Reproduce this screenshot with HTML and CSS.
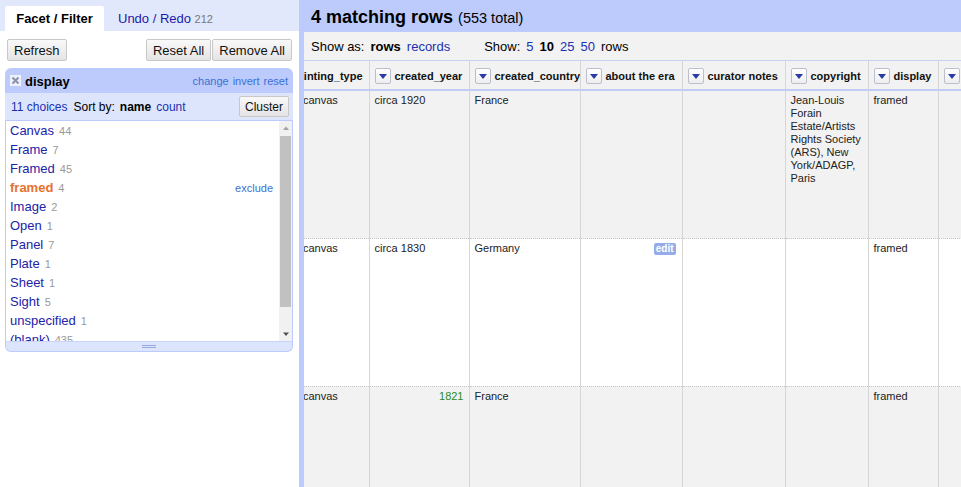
FILE: index.html
```html
<!DOCTYPE html>
<html>
<head>
<meta charset="utf-8">
<link rel="stylesheet" href="styles.css">
</head>
<body>
<div class="left">
  <div class="tabs">
    <div class="tab active">Facet / Filter</div>
    <div class="tab">Undo / Redo <span class="tabcount">212</span></div>
  </div>
  <div class="toolbar">
    <button class="btn">Refresh</button>
    <div class="spacer"></div>
    <button class="btn">Reset All</button>
    <button class="btn">Remove All</button>
  </div>
  <div class="facet">
    <div class="facet-header">
      <svg class="close" width="11" height="11" viewBox="0 0 11 11"><rect x="0" y="0" width="11" height="11" fill="#eef2fc"/><path d="M2.5 2.5 L8.5 8.5 M8.5 2.5 L2.5 8.5" stroke="#8892ad" stroke-width="2"/></svg>
      <span class="facet-title">display</span>
      <span class="spacer"></span>
      <a class="hlink">change</a><a class="hlink">invert</a><a class="hlink">reset</a>
    </div>
    <div class="facet-controls">
      <a class="choices">11 choices</a>
      <span class="sortby">Sort by:</span>
      <b class="sortname">name</b>
      <a class="choices">count</a>
      <span class="spacer"></span>
      <button class="btn small">Cluster</button>
    </div>
    <div class="facet-body">
      <div class="choice-list">
        <div class="choice"><a class="cname">Canvas</a><span class="ccount">44</span></div>
        <div class="choice"><a class="cname">Frame</a><span class="ccount">7</span></div>
        <div class="choice"><a class="cname">Framed</a><span class="ccount">45</span></div>
        <div class="choice selected"><a class="cname">framed</a><span class="ccount">4</span><span class="spacer"></span><a class="exclude">exclude</a></div>
        <div class="choice"><a class="cname">Image</a><span class="ccount">2</span></div>
        <div class="choice"><a class="cname">Open</a><span class="ccount">1</span></div>
        <div class="choice"><a class="cname">Panel</a><span class="ccount">7</span></div>
        <div class="choice"><a class="cname">Plate</a><span class="ccount">1</span></div>
        <div class="choice"><a class="cname">Sheet</a><span class="ccount">1</span></div>
        <div class="choice"><a class="cname">Sight</a><span class="ccount">5</span></div>
        <div class="choice"><a class="cname">unspecified</a><span class="ccount">1</span></div>
        <div class="choice"><a class="cname">(blank)</a><span class="ccount">435</span></div>
      </div>
      <div class="scrollbar">
        <svg class="arrow" width="12" height="12" viewBox="0 0 12 12"><path d="M3 8 L6 4.5 L9 8 Z" fill="#a3a3a3"/></svg>
        <div class="thumb"></div>
        <div class="track-rest"></div>
        <svg class="arrow" width="12" height="12" viewBox="0 0 12 12"><path d="M3 4.5 L6 8 L9 4.5 Z" fill="#505050"/></svg>
      </div>
    </div>
    <div class="facet-footer"><div class="grip"></div></div>
  </div>
</div>
<div class="right">
  <div class="summary"><b>4 matching rows</b> <span class="total">(553 total)</span></div>
  <div class="main">
    <div class="viewbar">
      <span>Show as:</span><b>rows</b><a class="link">records</a>
      <span class="showgrp">Show:</span><a class="link">5</a><b>10</b><a class="link">25</a><a class="link">50</a><span>rows</span>
    </div>
    <div class="table-wrap">
      <table class="data">
        <colgroup>
          <col class="w1"><col class="w2"><col class="w3"><col class="w4"><col class="w5"><col class="w6"><col class="w7"><col class="w8">
        </colgroup>
        <thead>
          <tr>
            <th class="cut"><div class="hd shift"><span class="dd"></span>painting_type</div></th>
            <th><div class="hd"><span class="dd"></span>created_year</div></th>
            <th><div class="hd"><span class="dd"></span>created_country</div></th>
            <th><div class="hd"><span class="dd"></span>about the era</div></th>
            <th><div class="hd"><span class="dd"></span>curator notes</div></th>
            <th><div class="hd"><span class="dd"></span>copyright</div></th>
            <th><div class="hd"><span class="dd"></span>display</div></th>
            <th><div class="hd"><span class="dd"></span></div></th>
          </tr>
        </thead>
        <tbody>
          <tr class="odd">
            <td class="cut"><span class="dshift">canvas</span></td>
            <td>circa 1920</td>
            <td>France</td>
            <td></td>
            <td></td>
            <td>Jean-Louis Forain Estate/Artists Rights Society (ARS), New York/ADAGP, Paris</td>
            <td>framed</td>
            <td></td>
          </tr>
          <tr class="even">
            <td class="cut"><span class="dshift">canvas</span></td>
            <td>circa 1830</td>
            <td>Germany</td>
            <td class="editcell"><span class="edit">edit</span></td>
            <td></td>
            <td></td>
            <td>framed</td>
            <td></td>
          </tr>
          <tr class="odd">
            <td class="cut"><span class="dshift">canvas</span></td>
            <td class="num">1821</td>
            <td>France</td>
            <td></td>
            <td></td>
            <td></td>
            <td>framed</td>
            <td></td>
          </tr>
        </tbody>
      </table>
    </div>
  </div>
</div>
</body>
</html>
```
FILE: styles.css
```css
html, body {
  margin: 0;
  padding: 0;
  height: 487px;
  overflow: hidden;
}
body {
  display: flex;
  font-family: "Liberation Sans", Arial, sans-serif;
  font-size: 13px;
  color: #000;
  background: #fff;
}
a { cursor: pointer; }
.spacer { flex: 1; }

/* left panel */
.left {
  width: 299px;
  flex: none;
  display: flex;
  flex-direction: column;
  background: #fff;
}
.tabs {
  height: 31px;
  background: #e2e8fb;
  display: flex;
  align-items: flex-end;
  padding-left: 5px;
  box-sizing: border-box;
}
.tab {
  height: 25px;
  line-height: 25px;
  padding: 0 14px;
  color: #1a1aaa;
  font-size: 13px;
}
.tab.active {
  width: 99px;
  box-sizing: border-box;
  padding: 0;
  text-align: center;
  background: #fff;
  color: #000;
  font-weight: bold;
  border-radius: 2px 2px 0 0;
}
.tabcount { color: #777; font-size: 11px; }

.toolbar {
  display: flex;
  gap: 1px;
  padding: 8px 7px 0 7px;
  height: 22px;
}
.btn {
  font-family: "Liberation Sans", Arial, sans-serif;
  font-size: 13px;
  height: 22px;
  padding: 0 6px;
  border: 1px solid #c8c8c8;
  border-radius: 2px;
  background: linear-gradient(#f9f9f9, #e4e4e4);
  color: #111;
  margin: 0;
}
.btn.small { height: 21px; font-size: 12px; padding: 0 5px; }

.facet {
  margin: 7px 6px 0 5px;
}
.facet-header {
  height: 25px;
  background: #bccbfb;
  border-radius: 6px 6px 0 0;
  display: flex;
  align-items: center;
  padding: 1px 5px 0 5px;
  box-sizing: border-box;
}
.close { margin-right: 4px; margin-top: -1px; }
.facet-title { font-weight: bold; font-size: 13px; }
.hlink {
  font-size: 11px;
  color: #3b6fd6;
  margin-left: 4px;
}
.facet-controls {
  height: 27px;
  background: #dde5fd;
  display: flex;
  align-items: center;
  padding: 0 4px 0 6px;
  font-size: 12px;
}
.choices { color: #2030b0; }
.sortby { margin: 0 5px 0 6px; }
.sortname { margin-right: 5px; }

.facet-body {
  height: 220px;
  border: 1px solid #bccbfb;
  border-bottom: none;
  display: flex;
  background: #fff;
  overflow: hidden;
}
.choice-list {
  flex: 1;
  padding: 0 6px 0 4px;
  overflow: hidden;
}
.choice {
  height: 19px;
  line-height: 19px;
  display: flex;
  align-items: baseline;
  white-space: nowrap;
}
.cname { color: #2222aa; font-size: 13px; }
.ccount { color: #999; font-size: 11px; margin-left: 5px; }
.selected .cname { color: #e8712a; font-weight: bold; }
.exclude { color: #3b6fd6; font-size: 11px; }

.scrollbar {
  width: 13px;
  display: flex;
  flex-direction: column;
  align-items: center;
  background: #f1f1f1;
}
.arrow { flex: none; margin: 1px 0; }
.thumb {
  width: 11px;
  height: 171px;
  background: #c1c1c1;
  margin-top: 1px;
}
.track-rest { flex: 1; }

.facet-footer {
  height: 9px;
  background: #dde5fd;
  border: 1px solid #bccbfb;
  border-top: 1px solid #c8d4fb;
  border-radius: 0 0 6px 6px;
  display: flex;
  justify-content: center;
  align-items: center;
}
.grip {
  width: 14px;
  height: 1px;
  border-top: 1px solid #95a8e2;
  border-bottom: 1px solid #95a8e2;
}

/* right panel */
.right {
  flex: 1;
  background: #bccbfb;
  display: flex;
  flex-direction: column;
  padding-left: 5px;
  min-width: 0;
}
.summary {
  height: 32px;
  line-height: 35px;
  padding-left: 7px;
  font-size: 18px;
  white-space: nowrap;
}
.summary .total { font-size: 14.5px; }
.main {
  flex: 1;
  background: #f2f2f2;
  display: flex;
  flex-direction: column;
  min-width: 0;
}
.viewbar {
  height: 28px;
  display: flex;
  align-items: center;
  gap: 6px;
  padding-left: 7px;
  font-size: 13px;
  white-space: nowrap;
}
.viewbar .link { color: #2030b0; }
.viewbar .showgrp { margin-left: 28px; }

.table-wrap {
  flex: 1;
  overflow: hidden;
  border-top: 1px solid #c8d0f0;
}
table.data {
  border-collapse: collapse;
  table-layout: fixed;
  width: 754px;
  font-size: 11px;
}
.w1 { width: 65px; }
.w2 { width: 100px; }
.w3 { width: 111px; }
.w4 { width: 102px; }
.w5 { width: 103px; }
.w6 { width: 83px; }
.w7 { width: 70px; }
.w8 { width: 120px; }

table.data th {
  height: 26px;
  padding: 2px 5px 0 5px;
  background: #f2f2f2;
  border-right: 1px solid #d6d6d6;
  border-bottom: 2px solid #c2cdf5;
  text-align: left;
  overflow: hidden;
  white-space: nowrap;
}
.hd {
  display: flex;
  align-items: center;
  gap: 4px;
  font-weight: bold;
  font-size: 11px;
  color: #111;
}
.hd.shift { margin-left: -38px; }
.dd {
  width: 14px;
  height: 14px;
  flex: none;
  border: 1px solid #b9bfcc;
  border-radius: 2px;
  background: linear-gradient(#ffffff, #eeeeee) ;
  display: flex;
  align-items: center;
  justify-content: center;
}
.dd::after {
  content: "";
  width: 0;
  height: 0;
  border-left: 4px solid transparent;
  border-right: 4px solid transparent;
  border-top: 5px solid #2a3aa8;
  margin-top: 1px;
}

table.data td {
  height: 141px;
  vertical-align: top;
  padding: 3px 5px 3px 5px;
  line-height: 13px;
  color: #222;
  border-right: 1px solid #d6d6d6;
  border-top: 1px dotted #c8c8c8;
  overflow: hidden;
}
table.data tbody tr:first-child td { border-top: none; }
tr.odd td { background: #f2f2f2; }
tr.even td { background: #fff; }
td.cut { white-space: nowrap; }
.dshift { display: inline-block; margin-left: -6px; }
table.data td.num { text-align: right; color: #2a8a2a; }
td.editcell { position: relative; }
.edit {
  position: absolute;
  top: 4px;
  right: 6px;
  background: #94ade8;
  color: #fff;
  font-weight: bold;
  font-size: 10px;
  line-height: 12px;
  padding: 0 2px;
  border-radius: 2px;
}
```
